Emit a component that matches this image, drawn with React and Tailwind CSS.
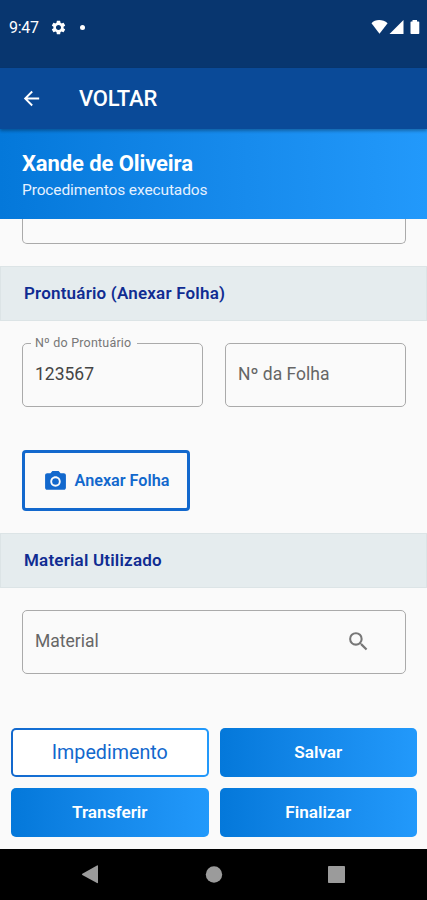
import { MdArrowBack, MdCameraAlt, MdSearch, MdSettings } from "react-icons/md";

function StatusBar() {
  return (
    <div className="flex h-[68px] items-start justify-between bg-[#08366f] pt-[18px] pr-[7px] pl-[9px] text-white">
      <div className="flex h-[19px] items-center">
        <span className="w-[41px] text-[16px] leading-[19px] tracking-[-0.3px]">9:47</span>
        <MdSettings className="mb-px size-[17px]" />
        <span className="mb-px ml-[13px] size-[5px] rounded-full bg-white" />
      </div>
      <svg width="50" height="17" viewBox="0 0 50 17" fill="currentColor">
        <path d="M1.5 5.2C5 1 13 1 17.6 5.2L9.5 15.8Z" />
        <path d="M33.5 2V16H19.5Z" />
        <path d="M40.5 4.3Q40.5 3.5 41.3 3.5H42.5V2H47V3.5H48.5Q49.3 3.5 49.3 4.3V15.2Q49.3 16 48.5 16H41.3Q40.5 16 40.5 15.2Z" />
      </svg>
    </div>
  );
}

function SectionTitle({ children }) {
  return (
    <h2 className="flex h-[55px] items-center border border-[#dce4e6] bg-[#e5ecee] pl-[23px] text-[17px] font-semibold tracking-[0.2px] text-[#102c92]">
      {children}
    </h2>
  );
}

function Field({ label, value, icon }) {
  return (
    <div className="relative flex h-16 flex-1 items-center rounded-[5px] border-[1.5px] border-[#aaa] pr-[34px] pb-px pl-3 text-[17.5px]">
      {value && (
        <span className="absolute -top-[9px] left-[8px] bg-[#fafafa] px-1 pr-[6px] text-[12.5px] leading-4 tracking-[0.2px] text-[#777]">
          {label}
        </span>
      )}
      <span className={value ? "flex-1 text-[#444]" : "flex-1 text-[#666]"}>
        {value || label}
      </span>
      {icon}
    </div>
  );
}

function ActionButton({ children }) {
  return (
    <button
      type="button"
      className="h-[49px] rounded-[5px] bg-linear-to-r from-[#0478da] to-[#2299fb] text-[17.2px] font-semibold text-white"
    >
      {children}
    </button>
  );
}

export default function App() {
  return (
    <div className="flex h-[900px] w-[427px] flex-col overflow-hidden bg-[#fafafa] font-['Roboto',sans-serif]">
      <StatusBar />

      <header className="z-10 flex h-[61px] items-center bg-[#0a4a98] pl-5 text-white shadow-[0_2px_3px_rgba(0,0,0,0.3)]">
        <MdArrowBack className="size-[23px]" />
        <h1 className="ml-9 text-[22px] font-medium tracking-[-0.2px]">VOLTAR</h1>
      </header>

      <div className="h-[90px] bg-linear-to-r from-[#0478da] to-[#2299fb] pt-[22px] pl-[22px] text-white">
        <p className="text-[22px] leading-[26px] font-bold tracking-[-0.1px]">Xande de Oliveira</p>
        <p className="mt-[3px] text-[15.5px] leading-5 tracking-[-0.12px] text-[#e5f1ff]">
          Procedimentos executados
        </p>
      </div>

      <main className="flex-1">
        <div className="mx-[22px] h-[25px] w-[384px] rounded-b-[5px] border-[1.5px] border-t-0 border-[#aaa]" />

        <div className="mt-[22px]">
          <SectionTitle>Prontuário (Anexar Folha)</SectionTitle>
        </div>
        <div className="mt-[22px] flex w-[406px] gap-[22px] pl-[22px]">
          <Field label="Nº do Prontuário" value="123567" />
          <Field label="Nº da Folha" />
        </div>

        <button
          type="button"
          className="mt-[43px] ml-[22px] flex h-[61px] w-[168px] items-center justify-center gap-[7px] rounded-[4px] border-[3px] border-[#1268cd] pt-px text-[16.2px] font-semibold text-[#1268cd]"
        >
          <MdCameraAlt className="size-[25px]" />
          Anexar Folha
        </button>

        <div className="mt-[22px]">
          <SectionTitle>Material Utilizado</SectionTitle>
        </div>
        <div className="mt-[22px] flex w-[406px] pl-[22px]">
          <Field label="Material" icon={<MdSearch className="size-[25px] text-[#777]" />} />
        </div>
      </main>

      <div className="grid grid-cols-2 gap-x-[11px] gap-y-[11px] pr-[10px] pb-[12px] pl-[11px]">
        <div className="flex h-[49px] rounded-[5px] bg-linear-to-r from-[#1268cd] to-[#2299fb] p-[2px]">
          <button
            type="button"
            className="flex-1 rounded-[3px] bg-white pt-px text-[19.7px] text-[#1268cd]"
          >
            Impedimento
          </button>
        </div>
        <ActionButton>Salvar</ActionButton>
        <ActionButton>Transferir</ActionButton>
        <ActionButton>Finalizar</ActionButton>
      </div>

      <nav className="h-[51px] bg-black text-[#9b9b9b]">
        <svg width="427" height="51" viewBox="0 0 427 51" fill="currentColor">
          <path d="M97 16.5Q98 16 98 17V33.5Q98 34.5 97 34L82.3 26Q81.5 25.3 82.3 24.7Z" />
          <circle cx="214" cy="25.5" r="8.2" />
          <rect x="328" y="17" width="17" height="17" rx="0.8" />
        </svg>
      </nav>
    </div>
  );
}
